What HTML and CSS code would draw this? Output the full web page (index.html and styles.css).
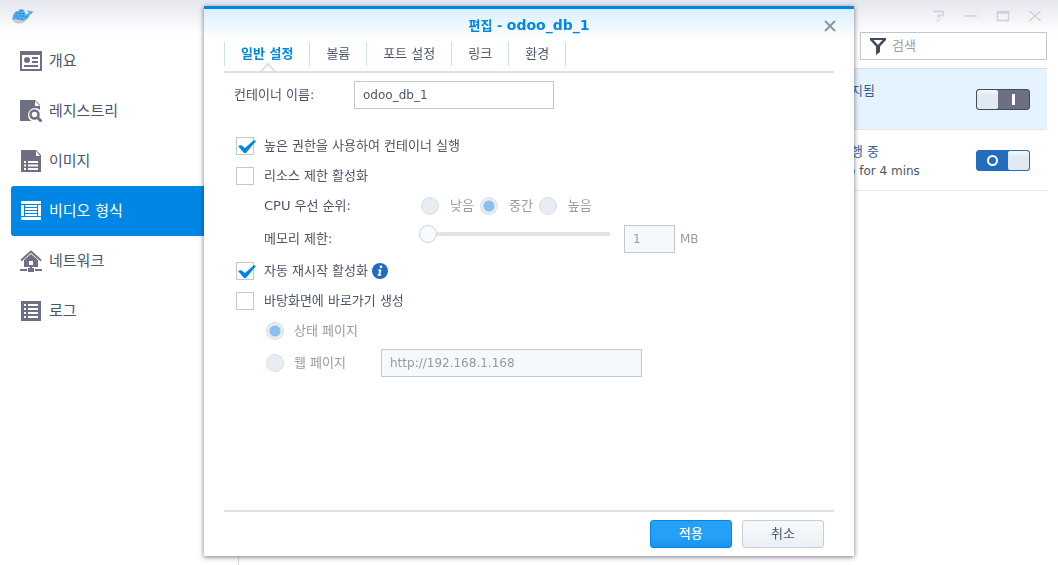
FILE: index.html
```html
<!DOCTYPE html>
<html lang="ko">
<head>
<meta charset="utf-8">
<title>Docker</title>
<link rel="stylesheet" href="styles.css">
</head>
<body>
<div class="app">
  <header class="titlebar">
    <svg class="logo" width="22" height="18" viewBox="0 0 22 18" aria-hidden="true">
      <path d="M1 9l2-4 3-1 3-2 3 1 2 4 3-1-1-3 2 1 2-.5 1.500 1-1.500 2-2 1-2 4-4 4-5 1.500-5-1.500L1 13z" fill="#d3dae0"/>
      <path d="M1 8.500L3 5l3-1 3-2 3 1 1.500 4.500 3-1L15.500 3l2.500 1.500 3-.5-1 2.500-2 1-2.500 4-3.500 2.500-5 .5-4-2-3 .5z" fill="#55aeee"/>
      <path d="M4 6h2M8 4h2M7 6.500h2M10.500 6.500h2M3 9h2M6.500 9h2M10 9h2M5 11.500h2M9 12h2M13 10h2" stroke="#1f7fd0" stroke-width="1"/>
      <path d="M1 13c2 0 3-1.500 5-.5 3 1.500 6 1.500 8.500-.5-2 3-4.500 4-7.500 4-3 0-5-1-6-3z" fill="#c2cad1"/>
    </svg>
    <div class="window-controls">
      <button type="button" aria-label="도움말"><svg width="14" height="12" viewBox="0 0 14 12"><path d="M1 1.500h10v4H6.500v2.500M5.500 10.500h2" /></svg></button>
      <button type="button" aria-label="최소화"><svg width="14" height="12" viewBox="0 0 14 12"><path d="M1 6h12"/></svg></button>
      <button type="button" aria-label="최대화"><svg width="14" height="12" viewBox="0 0 14 12"><path d="M1.500 1.500h11v9h-11zM1 3h12"/></svg></button>
      <button type="button" aria-label="닫기"><svg width="14" height="12" viewBox="0 0 14 12"><path d="M1.500 1l11 10M12.500 1l-11 10"/></svg></button>
    </div>
  </header>
  <div class="workspace">
    <nav class="sidebar">
      <a href="#overview"><svg width="22" height="22" viewBox="0 0 22 22"><path fill-rule="evenodd" d="M0 1h22v20H0zM2 5v14h18V5z"/><circle cx="7" cy="10" r="3"/><path d="M12 7h6v2h-6zM12 11h6v2h-6zM4 15h14v2H4z"/></svg>개요</a>
      <a href="#registry"><svg width="22" height="22" viewBox="0 0 22 22"><path d="M0 0h15l5 5v16H0z"/><path d="M15 1v5h5z" fill="#fff"/><circle cx="15" cy="15" r="7" fill="#fff"/><circle cx="14.500" cy="14.500" r="4" fill="none" stroke="#6f6f83" stroke-width="2.500"/><path d="M17.500 17.500l4 4" stroke="#6f6f83" stroke-width="3"/></svg>레지스트리</a>
      <a href="#image"><svg width="22" height="22" viewBox="0 0 22 22"><path d="M1 0h15l5 5v17H1z"/><path d="M16 1v5h4z" fill="#fff"/><path d="M4 11h2v2H4zM8 11h10v2H8zM4 14.500h2v2H4zM8 14.500h10v2H8zM4 18h2v2H4zM8 18h10v2H8z" fill="#fff"/></svg>이미지</a>
      <a href="#container" class="active"><svg width="22" height="22" viewBox="0 0 22 22"><path d="M1 1h20v3H1zM1 17h20v3H1zM1 5h3v11H1zM18 5h3v11h-3zM5 5h12v2H5zM5 8h12v2H5zM5 11h12v2H5zM5 14h12v2H5z"/></svg>비디오 형식</a>
      <a href="#network"><svg width="22" height="22" viewBox="0 0 22 22"><path fill-rule="evenodd" d="M11 4l7 6v7H4v-7zM9 11v4h4v-4z"/><path d="M1 10.500l10-9 10 9" fill="none" stroke="#6f6f83" stroke-width="2"/><path d="M0 19h7v2H0zM15 19h7v2h-7zM8 18h6v4H8zM10 16h2v3h-2z"/></svg>네트워크</a>
      <a href="#log"><svg width="22" height="22" viewBox="0 0 22 22"><path d="M1 1h20v20H1z"/><path d="M4 4h2v2H4zM8 4h10v2H8zM4 8h2v2H4zM8 8h10v2H8zM4 12h2v2H4zM8 12h10v2H8zM4 16h2v2H4zM8 16h10v2H8z" fill="#fff"/></svg>로그</a>
    </nav>
    <main class="main">
      <label class="search">
        <svg width="16" height="17" viewBox="0 0 16 17" aria-hidden="true"><path fill-rule="evenodd" d="M0 0h16v2l-6 6.500V14l-4 3V8.500L0 2zM3.500 2L8 7l4.500-5z" fill="#414b5f"/></svg>
        <input type="search" placeholder="검색" aria-label="검색">
      </label>
      <ul class="containers">
        <li class="selected">
          <div class="status"><span>중지됨</span></div>
          <button class="toggle off" type="button" role="switch" aria-checked="false" aria-label="시작"><span class="knob"></span><span class="mark"><i class="bar"></i></span></button>
        </li>
        <li>
          <div class="status"><span>실행 중</span><span class="uptime">Up for 4 mins</span></div>
          <button class="toggle on" type="button" role="switch" aria-checked="true" aria-label="중지"><span class="mark"><i class="ring"></i></span><span class="knob"></span></button>
        </li>
      </ul>
    </main>
  </div>
</div>

<div class="overlay">
  <form class="dialog" role="dialog" aria-labelledby="dialog-title">
    <header class="dialog-head">
      <h1 id="dialog-title">편집 - <span class="name">odoo_db_1</span></h1>
      <button class="close" type="button" aria-label="닫기"><svg width="12" height="12" viewBox="0 0 12 12"><path d="M1 1l10 10M11 1L1 11" stroke="#8b95a3" stroke-width="1.800"/></svg></button>
    </header>
    <div class="tabs" role="tablist">
      <button class="current" type="button" role="tab" aria-selected="true">일반 설정</button>
      <button type="button" role="tab">볼륨</button>
      <button type="button" role="tab">포트 설정</button>
      <button type="button" role="tab">링크</button>
      <button type="button" role="tab">환경</button>
    </div>
    <div class="panel">
      <div class="row name-row">
        <label for="name">컨테이너 이름:</label>
        <input class="text" id="name" type="text" value="odoo_db_1">
      </div>
      <div class="row">
        <span class="check"><input type="checkbox" id="priv" checked><svg width="20" height="18" viewBox="0 0 20 18"><path d="M2 9l3-1 4 3 9-8 2 1-10 12H8z"/></svg></span>
        <label for="priv">높은 권한을 사용하여 컨테이너 실행</label>
      </div>
      <div class="row">
        <span class="check"><input type="checkbox" id="limit"></span>
        <label for="limit">리소스 제한 활성화</label>
      </div>
      <div class="row indent">
        <span class="caption">CPU 우선 순위:</span>
        <div class="radios">
          <label><input type="radio" name="cpu" disabled>낮음</label>
          <label><input type="radio" name="cpu" disabled checked>중간</label>
          <label><input type="radio" name="cpu" disabled>높음</label>
        </div>
      </div>
      <div class="row indent memory">
        <label class="caption" for="mem">메모리 제한:</label>
        <input class="slider" type="range" min="0" max="100" value="0" disabled aria-label="메모리 제한">
        <input class="text amount" id="mem" type="text" value="1" disabled>
        <span class="unit">MB</span>
      </div>
      <div class="row">
        <span class="check"><input type="checkbox" id="auto" checked><svg width="20" height="18" viewBox="0 0 20 18"><path d="M2 9l3-1 4 3 9-8 2 1-10 12H8z"/></svg></span>
        <label for="auto">자동 재시작 활성화</label>
        <svg class="info" width="16" height="16" viewBox="0 0 16 16" aria-hidden="true"><circle cx="8" cy="8" r="8" fill="#1f6cbe"/><circle cx="9" cy="3.800" r="1.400" fill="#fff"/><path d="M6 6.500h3.500L8.300 11.500h1.200l-.4 1.200H5.500l.3-1.200h.6L7.300 7.600H5.800z" fill="#fff"/></svg>
      </div>
      <div class="row">
        <span class="check"><input type="checkbox" id="shortcut"></span>
        <label for="shortcut">바탕화면에 바로가기 생성</label>
      </div>
      <div class="row indent page">
        <label><input type="radio" name="page" disabled checked>상태 페이지</label>
      </div>
      <div class="row indent page web">
        <label><input type="radio" name="page" disabled>웹 페이지</label>
        <input class="text url" type="text" value="http://192.168.1.168" disabled aria-label="웹 페이지">
      </div>
    </div>
    <footer class="dialog-foot">
      <button class="btn primary" type="submit">적용</button>
      <button class="btn" type="button">취소</button>
    </footer>
  </form>
</div>
</body>
</html>
```

FILE: styles.css
```css
* { box-sizing: border-box; }

body {
  margin: 0;
  min-height: 100vh;
  font: 13px/18px "DejaVu Sans", "Noto Sans CJK KR", sans-serif;
  color: #4b5568;
  background: #fff;
  overflow: hidden;
}

button, input { font: inherit; color: inherit; margin: 0; }
button { padding: 0; border: 0; background: none; cursor: pointer; }
svg { display: block; flex: none; }

/* Application window */
.app {
  display: flex;
  flex-direction: column;
  height: 100vh;
  background: linear-gradient(#e4e7ed, #fff 34px);
}
.titlebar {
  display: flex;
  justify-content: space-between;
  align-items: center;
  height: 32px;
  padding: 0 16px 0 12px;
}
.window-controls { display: flex; gap: 18px; }
.window-controls path { fill: none; stroke: #ced2d6; stroke-width: 1.5; }
.workspace { flex: 1; display: flex; }

.sidebar { width: 238px; padding: 4px 0 0 11px; }
.sidebar a {
  display: flex;
  align-items: center;
  gap: 7px;
  height: 50px;
  padding-left: 9px;
  font-size: 15px;
  color: #4b5568;
  text-decoration: none;
  border-radius: 3px;
}
.sidebar svg { fill: #6f6f83; }
.sidebar .active { background: #0086e5; color: #fff; }
.sidebar .active svg { fill: #fff; }

.main {
  flex: 1;
  display: flex;
  flex-direction: column;
  padding-right: 11px;
  border-left: 1px solid #d5dade;
}
.search {
  display: flex;
  align-items: center;
  align-self: flex-end;
  gap: 6px;
  width: 187px;
  height: 28px;
  padding: 0 9px;
  border: 1px solid #c0c7d1;
  background: #fff;
}
.search input {
  flex: 1;
  min-width: 0;
  padding: 0;
  border: 0;
  outline: 0;
  background: none;
}
.search input::placeholder { color: #9aa0a8; opacity: 1; }

.containers { list-style: none; margin: 8px 0 0; padding: 0; border-top: 1px solid #cfdde8; }
.containers li {
  display: flex;
  justify-content: flex-end;
  align-items: center;
  height: 61px;
  padding-right: 17px;
  border-bottom: 1px solid #e3e8ee;
}
.containers .selected { background: #e5f3fe; }
.status {
  display: flex;
  flex-direction: column;
  gap: 1px;
  width: 137px;
  height: 35px;
  color: #355f94;
}
.uptime { font-size: 12px; color: #4b5568; }

.toggle {
  display: flex;
  width: 54px;
  height: 21px;
  border: 1px solid #414b5f;
  border-radius: 3px;
  overflow: hidden;
}
.knob { width: 21px; height: 19px; border-radius: 2px; background: linear-gradient(#f3f6f9 2px, #e1eaf2 5px); }
.mark { flex: 1; height: 19px; display: grid; place-items: center; }
.off { background: #6f6f83; }
.on { background: #236dbe; border-color: #236dbe; }
.bar { width: 3px; height: 11px; background: #fff; }
.ring { width: 11px; height: 11px; border: 2px solid #fff; border-radius: 50%; }

/* Edit dialog */
.overlay {
  position: fixed;
  inset: 0;
  display: flex;
  justify-content: center;
  padding: 6px 0 9px;
}
.dialog {
  display: flex;
  flex-direction: column;
  width: 650px;
  max-width: 100%;
  padding: 0 20px;
  border-top: 3px solid #0086e5;
  background: linear-gradient(#d8effd, #fff 30px);
  box-shadow: 0 1px 5px rgba(40, 45, 60, .65);
}
.dialog-head {
  display: grid;
  grid-template-columns: 12px 1fr 12px;
  align-items: center;
  height: 33px;
  margin: 0 -2px;
}
.dialog-head h1 {
  grid-column: 2;
  margin: 0;
  font-size: 13px;
  line-height: 18px;
  text-align: center;
  color: #0086e5;
}
.name { font-size: 14px; }
.close { display: grid; place-items: center; height: 30px; }

.tabs {
  display: flex;
  height: 31px;
  border-bottom: 2px solid #dde1e5;
}
.tabs button {
  position: relative;
  height: 24px;
  padding: 0 16px;
  border-right: 1px solid #cfdfea;
}
.tabs button:first-child { border-left: 1px solid #cfdfea; }
.tabs .current { color: #0086e5; font-weight: bold; }
.tabs .current::after {
  content: "";
  position: absolute;
  left: calc(50% - 5px);
  bottom: -11px;
  width: 10px;
  height: 10px;
  background: #fff;
  border: solid #d8dde1;
  border-width: 2px 0 0 2px;
  transform: rotate(45deg);
  clip-path: polygon(0 0, 100% 0, 0 100%);
}

.panel { flex: 1; padding: 8px 12px 0; }
.row { display: flex; align-items: center; height: 30px; }
.name-row { height: 28px; margin: 0 -2px 22px; }
.name-row label { width: 120px; }

.text {
  width: 200px;
  height: 28px;
  padding: 0 8px;
  border: 1px solid #c0c7d1;
  font-size: 12px;
  background: #fff;
}
.text:disabled { background: #f5f9fc; color: #969ba4; }

.check { display: grid; width: 28px; }
.check > * { grid-area: 1 / 1; }
.check input {
  appearance: none;
  width: 18px;
  height: 18px;
  border: 1px solid #c0c7d1;
  background: #fff;
}
.check svg { fill: #0086e5; pointer-events: none; }
.info { margin-left: 4px; }

.indent { padding-left: 28px; }
.caption { width: 155px; }
.radios { display: flex; gap: 6px; margin-left: 2px; color: #969ba4; }
.radios label, .page label { display: flex; align-items: center; }
.radios label { gap: 11px; }
input[type="radio"] {
  appearance: none;
  width: 18px;
  height: 18px;
  border: 1px solid #d7dfe7;
  border-radius: 50%;
  background: #e7edf3;
}
input[type="radio"]:checked { background: radial-gradient(circle, #8abff0 5px, #e7edf3 6px); }

.memory { height: 35px; }
.slider {
  appearance: none;
  width: 191px;
  height: 18px;
  margin: 0 14px 10px 0;
  background: linear-gradient(#e0e4e8, #e0e4e8) center / 100% 4px no-repeat;
}
.slider::-webkit-slider-thumb {
  appearance: none;
  width: 18px;
  height: 18px;
  border: 1px solid #cbd3da;
  border-radius: 50%;
  background: #f8fbfd;
}
.amount { width: 51px; }
.unit { margin-left: 5px; font-size: 12px; color: #969ba4; }

.page { padding-left: 30px; color: #969ba4; }
.page label { gap: 10px; width: 115px; }
.web { height: 34px; }
.url { width: 261px; }

.dialog-foot {
  display: flex;
  justify-content: flex-end;
  gap: 10px;
  height: 46px;
  padding: 8px 10px 0;
  border-top: 2px solid #dde1e5;
}
.btn {
  width: 82px;
  height: 28px;
  border: 1px solid #c5cfd8;
  border-radius: 3px;
  background: linear-gradient(#f7fafc, #eaf0f5);
}
.primary { border-color: #0086e5; background: linear-gradient(#25a0f7 60%, #1794ee); color: #fff; font-weight: 500; }
```
